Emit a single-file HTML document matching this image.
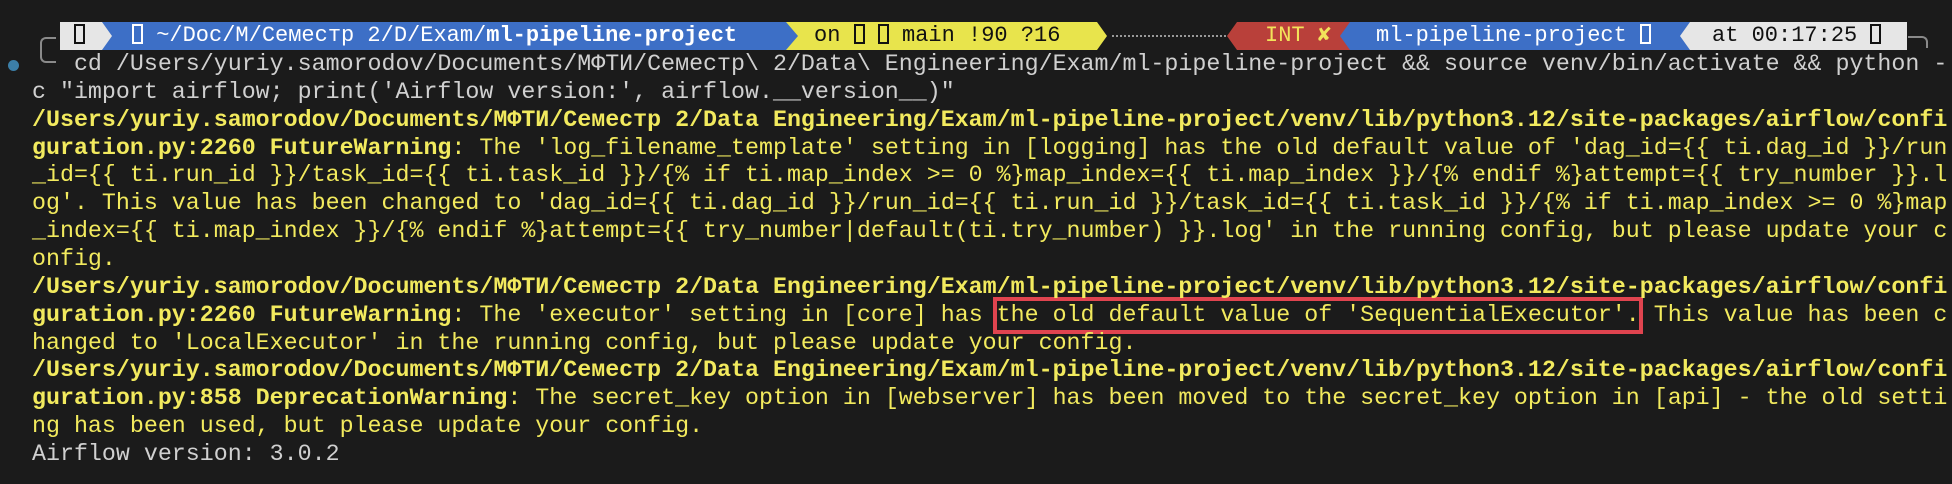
<!DOCTYPE html>
<html><head><meta charset="utf-8"><style>
html,body{margin:0;padding:0;background:#1b1b1b;width:1952px;height:484px;overflow:hidden;position:relative}
.t{position:absolute;left:32px;top:51px;margin:0;font-family:"Liberation Mono",monospace;font-size:23.3px;line-height:27.86px;color:#f2ea5e;white-space:pre}
.g{color:#d0d0d0}
b{font-weight:bold}
.seg{position:absolute;top:22px;height:28px;font-family:"Liberation Mono",monospace;font-size:22px;line-height:28px;white-space:pre;overflow:hidden}
.arr{position:absolute;top:22px;width:0;height:0;border-top:14px solid transparent;border-bottom:14px solid transparent}
.box{display:inline-block;width:11px;height:20px;border:2px solid currentColor;vertical-align:-3px;box-sizing:border-box}
</style></head><body>
<div style="position:absolute;left:40px;top:37px;width:16px;height:26px;border:2px solid #8a8a8a;border-right:none;border-radius:6px 0 0 6px;box-sizing:border-box"></div>
<div style="position:absolute;left:8px;top:60px;width:11px;height:11px;border-radius:50%;background:#3c7fa8"></div>
<div style="position:absolute;left:1908px;top:36px;width:18px;height:10px;border-top:2px solid #8a8a8a;border-right:2px solid #8a8a8a;border-radius:0 6px 0 0"></div>

<div class="seg" style="left:60px;width:42px;background:#e6e6e6;color:#111;padding-left:14px;box-sizing:border-box"><span class="box"></span></div>
<div class="seg" style="left:102px;width:684px;background:#3d6fc6;color:#fff;padding-left:30px;box-sizing:border-box"><span class="box"></span> ~/Doc/M/Семестр 2/D/Exam/<b>ml-pipeline-project</b></div>
<div class="arr" style="left:102px;border-left:10px solid #e6e6e6"></div>
<div class="seg" style="left:786px;width:311px;background:#e8e44c;color:#111;padding-left:28px;box-sizing:border-box">on <span class="box"></span> <span class="box"></span> main !90 ?16</div>
<div class="arr" style="left:786px;border-left:12px solid #3d6fc6"></div>
<div class="arr" style="left:1097px;border-left:10px solid #e8e44c"></div>
<div style="position:absolute;left:1112px;top:35px;width:122px;border-top:2px dotted #999"></div>
<div class="arr" style="left:1227px;border-right:10px solid #b9403a"></div>
<div class="seg" style="left:1237px;width:113px;background:#b9403a;color:#f2e35a;padding-left:28px;box-sizing:border-box">INT ✘</div>
<div class="arr" style="left:1340px;border-right:10px solid #3d6fc6"></div>
<div class="seg" style="left:1350px;width:340px;background:#3d6fc6;color:#fff;padding-left:26px;box-sizing:border-box">ml-pipeline-project <span class="box"></span></div>
<div class="arr" style="left:1680px;border-right:10px solid #e6e6e6"></div>
<div class="seg" style="left:1690px;width:217px;background:#e6e6e6;color:#111;padding-left:22px;box-sizing:border-box">at 00:17:25 <span class="box"></span></div>

<div style="position:absolute;left:993px;top:297px;width:650px;height:37px;border:4px solid #e0444f;box-sizing:border-box"></div>

<pre class="t"><span class="g">   cd /Users/yuriy.samorodov/Documents/МФТИ/Семестр\ 2/Data\ Engineering/Exam/ml-pipeline-project &amp;&amp; source venv/bin/activate &amp;&amp; python -
c "import airflow; print('Airflow version:', airflow.__version__)"</span>
<b>/Users/yuriy.samorodov/Documents/МФТИ/Семестр 2/Data Engineering/Exam/ml-pipeline-project/venv/lib/python3.12/site-packages/airflow/confi</b>
<b>guration.py:2260 FutureWarning</b>: The 'log_filename_template' setting in [logging] has the old default value of 'dag_id={{ ti.dag_id }}/run
_id={{ ti.run_id }}/task_id={{ ti.task_id }}/{% if ti.map_index &gt;= 0 %}map_index={{ ti.map_index }}/{% endif %}attempt={{ try_number }}.l
og'. This value has been changed to 'dag_id={{ ti.dag_id }}/run_id={{ ti.run_id }}/task_id={{ ti.task_id }}/{% if ti.map_index &gt;= 0 %}map
_index={{ ti.map_index }}/{% endif %}attempt={{ try_number|default(ti.try_number) }}.log' in the running config, but please update your c
onfig.
<b>/Users/yuriy.samorodov/Documents/МФТИ/Семестр 2/Data Engineering/Exam/ml-pipeline-project/venv/lib/python3.12/site-packages/airflow/confi</b>
<b>guration.py:2260 FutureWarning</b>: The 'executor' setting in [core] has the old default value of 'SequentialExecutor'. This value has been c
hanged to 'LocalExecutor' in the running config, but please update your config.
<b>/Users/yuriy.samorodov/Documents/МФТИ/Семестр 2/Data Engineering/Exam/ml-pipeline-project/venv/lib/python3.12/site-packages/airflow/confi</b>
<b>guration.py:858 DeprecationWarning</b>: The secret_key option in [webserver] has been moved to the secret_key option in [api] - the old setti
ng has been used, but please update your config.
<span class="g">Airflow version: 3.0.2</span></pre>
</body></html>
